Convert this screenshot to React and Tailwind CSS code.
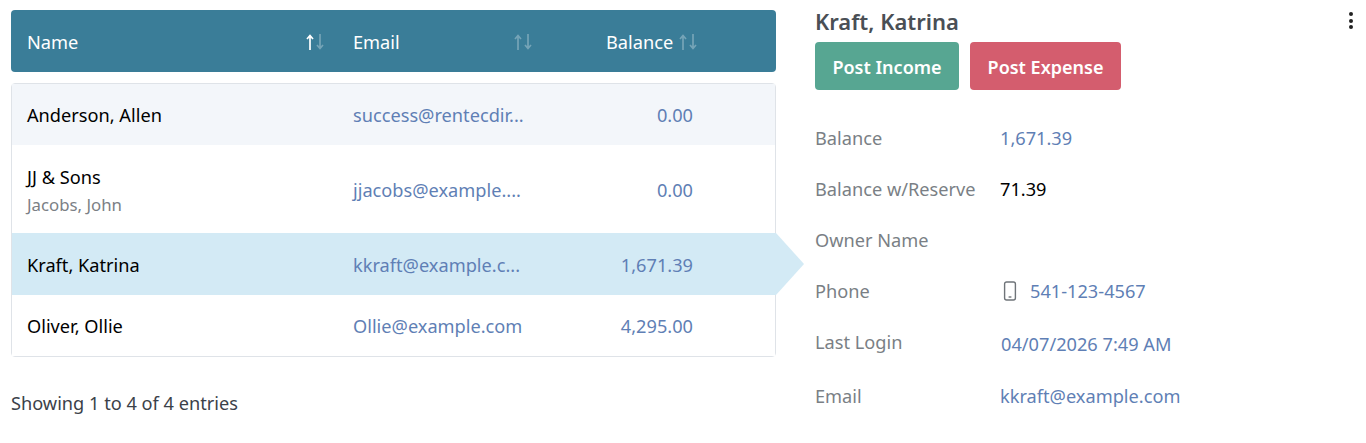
const sortIcon = (upActive) => (
  <svg width="22" height="20" viewBox="0 0 22 20" fill="none" strokeWidth="1.7" className="shrink-0">
    <g stroke="#ffffff" strokeOpacity={upActive ? 1 : 0.3}>
      <path d="M6 18V3.5M3 7l3-3.5L9 7" />
    </g>
    <g stroke="#ffffff" strokeOpacity="0.3">
      <path d="M16 2v14.5M13 13l3 3.5 3-3.5" />
    </g>
  </svg>
);

const rows = [
  { name: "Anderson, Allen", email: "success@rentecdir...", bal: "0.00", cls: "h-[61px] bg-[#f3f6fa]" },
  { name: "JJ & Sons", sub: "Jacobs, John", email: "jjacobs@example....", bal: "0.00", cls: "h-[88px] bg-white", off: "pt-[2px]" },
  { name: "Kraft, Katrina", email: "kkraft@example.c...", bal: "1,671.39", cls: "h-[62px] pt-[2px] bg-[#d3eaf5]", active: true },
  { name: "Oliver, Ollie", email: "Ollie@example.com", bal: "4,295.00", cls: "h-[61px] bg-white" },
];

const details = [
  { label: "Balance", value: "1,671.39", h: "h-[51px]", color: "text-[#5f7fb5]" },
  { label: "Balance w/Reserve", value: "71.39", h: "h-[51px]", color: "text-black" },
  { label: "Owner Name", value: "", h: "h-[51px]", color: "" },
  { label: "Phone", value: "541-123-4567", phone: true, h: "h-[51px]", color: "text-[#5f7fb5]" },
  { label: "Last Login", value: "04/07/2026 7:49 AM", h: "h-[54px]", color: "text-[#5f7fb5]", shift: true },
  { label: "Email", value: "kkraft@example.com", h: "h-[30px]", color: "text-[#5f7fb5]" },
];

export default function App() {
  return (
    <div className="w-[1366px] h-[443px] overflow-hidden bg-white flex font-['Noto_Sans',sans-serif] text-[18.2px] leading-[24px]">
      <div className="w-[765px] ml-[11px] mt-[10px] shrink-0">
        <div className="h-[62px] pt-[1px] rounded-[4px] bg-[#3a7d98] text-white grid grid-cols-[326px_253px_186px] items-center">
          <div className="flex items-center justify-between pl-4 pr-[11px]">
            <span>Name</span>
            {sortIcon(true)}
          </div>
          <div className="flex items-center justify-between pl-4 pr-[56px]">
            <span>Email</span>
            {sortIcon(false)}
          </div>
          <div className="flex items-center gap-[4px] pl-[16px]">
            <span>Balance</span>
            {sortIcon(false)}
          </div>
        </div>

        <div className="mt-[11px] h-[274px] border border-[#dfe3e8] rounded-[4px] relative">
          {rows.map((r) => (
            <div key={r.name} className={`${r.cls} grid grid-cols-[326px_253px_100px] items-center relative ${r.active ? "-mr-px" : ""}`}>
              <div className={`${r.off || ""} pl-[15px]`}>
                <div className="text-black">{r.name}</div>
                {r.sub && <div className="text-[16.8px] leading-[20px] mt-[6px] text-[#7b7f85]">{r.sub}</div>}
              </div>
              <div className={`${r.off || ""} pl-[15px] text-[#5f7fb5] whitespace-nowrap`}>{r.email}</div>
              <div className={`${r.off || ""} text-right text-[#5f7fb5] translate-x-[2px]`}>{r.bal}</div>
              {r.active && (
                <svg width="28" height="62" viewBox="0 0 28 62" className="absolute left-full top-0">
                  <path d="M0 0L28 31L0 62Z" fill="#d3eaf5" />
                </svg>
              )}
            </div>
          ))}
        </div>

        <div className="mt-[34px] text-[#3b4149]">Showing 1 to 4 of 4 entries</div>
      </div>

      <div className="ml-[39px] flex-1 relative">
        <div className="mt-[8px] text-[22px] leading-[26px] font-semibold text-[#4a4f55]">Kraft, Katrina</div>
        <div className="mt-[8px] flex gap-[11px]">
          <button className="w-[144px] h-[48px] pt-px rounded-[4px] bg-[#57a692] text-white font-semibold text-[18px]">Post Income</button>
          <button className="w-[151px] h-[48px] pt-px rounded-[4px] bg-[#d45d6e] text-white font-semibold text-[18px]">Post Expense</button>
        </div>
        <div className="mt-[36px]">
          {details.map((d) => (
            <div key={d.label} className={`${d.h} grid grid-cols-[185px_1fr] items-start`}>
              <div className="text-[#7a7f85] whitespace-nowrap">{d.label}</div>
              <div className={`${d.color} ${d.shift ? "mt-[2px] pl-px" : ""} flex items-center gap-[10px]`}>
                {d.phone && (
                  <svg width="20" height="20" viewBox="0 0 20 20" fill="none" stroke="#6f7479" strokeWidth="1.4">
                    <rect x="4.6" y="1" width="10.8" height="18" rx="2" />
                    <path d="M8.6 16h2.8" />
                  </svg>
                )}
                {d.value && <span>{d.value}</span>}
              </div>
            </div>
          ))}
        </div>
        <div className="absolute top-[12px] left-[534px] flex flex-col gap-[2.5px]">
          <span className="w-[4px] h-[4px] rounded-full bg-[#222]" />
          <span className="w-[4px] h-[4px] rounded-full bg-[#222]" />
          <span className="w-[4px] h-[4px] rounded-full bg-[#222]" />
        </div>
      </div>
    </div>
  );
}
